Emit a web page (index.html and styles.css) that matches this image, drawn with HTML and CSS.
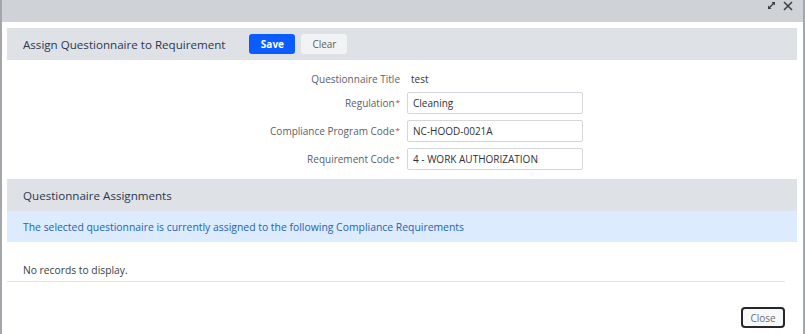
FILE: index.html
```html
<!DOCTYPE html>
<html lang="en">
<head>
    <meta charset="UTF-8">
    <title>Assign Questionnaire to Requirement</title>
    <link rel="stylesheet" href="styles.css">
</head>
<body>

<div class="window">

    <div class="titlebar">
        <svg class="tb-icon expand" width="9" height="9" viewBox="0 0 9 9">
            <path d="M1.5 7.5 L7.5 1.5" stroke="#3c3f44" stroke-width="1.4" fill="none"/>
            <path d="M4.5 1 L8 1 L8 4.5 Z" fill="#3c3f44"/>
            <path d="M1 4.5 L1 8 L4.5 8 Z" fill="#3c3f44"/>
        </svg>
        <svg class="tb-icon close-x" width="10" height="10" viewBox="0 0 10 10">
            <path d="M1 1 L9 9 M9 1 L1 9" stroke="#3c3f44" stroke-width="1.6" fill="none"/>
        </svg>
    </div>

    <div class="content">

        <div class="panel-head">
            <span class="panel-title">Assign Questionnaire to Requirement</span>
            <button class="btn btn-save">Save</button>
            <button class="btn btn-clear">Clear</button>
        </div>

        <div class="form">
            <div class="row row-text">
                <label>Questionnaire Title</label>
                <span class="value">test</span>
            </div>
            <div class="row">
                <label>Regulation<span class="req">*</span></label>
                <input type="text" value="Cleaning">
            </div>
            <div class="row">
                <label>Compliance Program Code<span class="req">*</span></label>
                <input type="text" value="NC-HOOD-0021A">
            </div>
            <div class="row">
                <label>Requirement Code<span class="req">*</span></label>
                <input type="text" value="4 - WORK AUTHORIZATION">
            </div>
        </div>

        <div class="panel-head">
            <span class="panel-title">Questionnaire Assignments</span>
        </div>
        <div class="info">The selected questionnaire is currently assigned to the following Compliance Requirements</div>

        <div class="empty">No records to display.</div>

        <div class="footer">
            <button class="btn btn-close">Close</button>
        </div>

    </div>
</div>

</body>
</html>
```

FILE: styles.css
```css
body {
    margin: 0;
    padding: 0;
    font-family: "Open Sans", "Liberation Sans", sans-serif;
    background-color: #ffffff;
}
.window {
    height: 334px;
    box-sizing: border-box;
    border-left: 2px solid #a3a7ac;
    border-right: 2px solid #a3a7ac;
    background-color: #ffffff;
}
.titlebar {
    height: 22px;
    background-color: #cfd3d7;
    display: flex;
    justify-content: flex-end;
    align-items: flex-start;
    padding-right: 10px;
    gap: 7px;
}
.tb-icon {
    margin-top: 1px;
}
.content {
    padding: 6px 6px 0 5px;
}
.panel-head {
    height: 32px;
    background-color: #dee2e6;
    display: flex;
    align-items: center;
    padding-left: 16px;
}
.panel-title {
    font-size: 11.6px;
    color: #2b3850;
    margin-right: 24px;
}
.btn {
    font-family: "Open Sans", "Liberation Sans", sans-serif;
    font-size: 10px;
    height: 20px;
    width: 46px;
    border: none;
    border-radius: 3px;
    cursor: pointer;
    padding: 0;
}
.btn-save {
    background-color: #0b5cff;
    color: #ffffff;
    font-weight: bold;
    margin-right: 6px;
}
.btn-clear {
    background-color: #f1f3f5;
    color: #5a5d62;
}
.form {
    padding: 10px 0 9px 0;
}
.row {
    display: grid;
    grid-template-columns: 393px 176px;
    column-gap: 7px;
    align-items: center;
    height: 22px;
    margin-bottom: 6px;
}
.row:last-child {
    margin-bottom: 0;
}
.row-text {
    height: 18px;
    margin-bottom: 4px;
}
label {
    text-align: right;
    font-size: 10px;
    color: #5d6066;
}
.req {
    color: #d0302f;
    font-size: 8px;
    vertical-align: 2px;
    margin-left: 1px;
}
.value {
    font-size: 10px;
    color: #33363b;
    padding-left: 4px;
}
input[type="text"] {
    height: 22px;
    box-sizing: border-box;
    border: 1px solid #d4d7db;
    border-radius: 2px;
    padding: 0 5px;
    font-family: "Open Sans", "Liberation Sans", sans-serif;
    font-size: 10px;
    color: #2f3237;
}
.info {
    height: 31px;
    background-color: #dcebfd;
    color: #1f63b5;
    font-size: 10.4px;
    display: flex;
    align-items: center;
    padding-left: 16px;
}
.empty {
    font-size: 10.3px;
    line-height: 16px;
    color: #3b3e43;
    padding: 20px 16px 3px 16px;
    margin-right: 12px;
    border-bottom: 1px solid #e3e5e8;
}
.footer {
    display: flex;
    justify-content: flex-end;
    padding: 25px 12px 0 0;
}
.btn-close {
    width: 44px;
    height: 21px;
    background-color: #f7f8f9;
    border: 2px solid #25272b;
    border-radius: 4px;
    color: #6a6d72;
}
```
